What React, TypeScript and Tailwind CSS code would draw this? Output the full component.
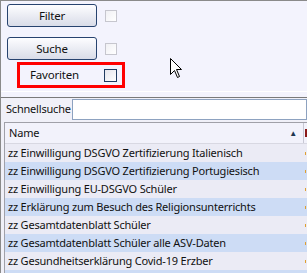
const rows = [
  "zz Einwilligung DSGVO Zertifizierung Italienisch",
  "zz Einwilligung DSGVO Zertifizierung Portugiesisch",
  "zz Einwilligung EU-DSGVO Schüler",
  "zz Erklärung zum Besuch des Religionsunterrichts",
  "zz Gesamtdatenblatt Schüler",
  "zz Gesamtdatenblatt Schüler alle ASV-Daten",
  "zz Gesundheitserklärung Covid-19 Erzber",
  "",
];

const font = { fontFamily: '"Noto Sans", "Open Sans", sans-serif' };

function WinButton({ label }: { label: string }) {
  return (
    <button
      type="button"
      className="flex h-[23px] w-[90px] items-center justify-center rounded-[3px] border border-[#27436f] bg-gradient-to-b from-[#fdfdff] to-[#d9dce8] text-[11.5px] text-[#111]"
    >
      {label}
    </button>
  );
}

function DisabledBox() {
  return <div className="h-[12px] w-[12px] border border-[#c6c6ce] bg-gradient-to-br from-[#f0f0f4] to-white" />;
}

function Cursor() {
  return (
    <svg className="absolute left-[169px] top-[57px]" width="13" height="21" viewBox="0 0 13 21">
      <path
        d="M0.5 0.5 L0.5 16.5 L4.5 12.5 L7.5 19.5 L9.5 18.5 L6.5 11.5 L11.5 11.5 Z"
        fill="#fff"
        stroke="#000"
        strokeWidth="1"
        strokeLinejoin="miter"
      />
    </svg>
  );
}

export default function App() {
  return (
    <div
      style={font}
      className="relative h-[273px] w-[307px] overflow-hidden border-l border-t border-[#8a8a8a] bg-[#f0f0f8] text-[11px] tracking-[-0.2px] text-[#111]"
    >
      {/* top panel */}
      <div className="flex h-[90px] flex-col bg-[#f3f3fd] pl-[6px] pt-[3px]">
        <div className="flex items-center gap-[8px]">
          <WinButton label="Filter" />
          <DisabledBox />
        </div>
        <div className="mt-[10px] flex items-center gap-[8px]">
          <WinButton label="Suche" />
          <DisabledBox />
        </div>
        <div className="ml-[10px] mt-[2px] flex h-[26px] w-[108px] items-center border-[3px] border-[#ff0000] pl-[10px] pr-[5px] text-[11.5px]">
          <span className="flex-1">Favoriten</span>
          <div className="h-[13px] w-[13px] border border-[#1f3a60] bg-gradient-to-br from-[#e4e4ec] to-white" />
        </div>
      </div>
      <div className="h-px bg-white" />
      <div className="h-[5px] bg-[#f3f3fd]" />
      <div className="h-px bg-[#7a7a7a]" />

      {/* quick search */}
      <div className="mt-px flex h-[21px] items-center pl-[5px]">
        <span className="w-[66px] whitespace-nowrap">Schnellsuche</span>
        <div className="h-[21px] flex-1 border border-[#8da2c0] bg-white" />
      </div>

      {/* table */}
      <div className="ml-[3px] mt-[2px] border-l border-t border-[#a0a0a8] bg-[#ededf6]">
        <div className="flex h-[21px] items-center border-b border-[#d8d8e2] bg-[#f2f2fb]">
          <span className="flex-1 pl-[4px]">Name</span>
          <span className="mr-[6px] text-[8px] text-[#1e3550]">▲</span>
          <div className="h-full w-px bg-[#c8c8d4]" />
          <div className="ml-[1px] h-[8px] w-[2px] bg-[#8b1a1a]" />
        </div>
        {rows.map((r, i) => (
          <div
            key={i}
            className={`flex h-[18px] items-center ${i % 2 === 1 ? "bg-[#cddcf5]" : "bg-[#ebebf5]"}`}
          >
            <span className="flex-1 truncate pl-[3px]">{r}</span>
            <div className="mr-[1px] h-[3px] w-px bg-[#e0a030]" />
          </div>
        ))}
      </div>

      <Cursor />
    </div>
  );
}
